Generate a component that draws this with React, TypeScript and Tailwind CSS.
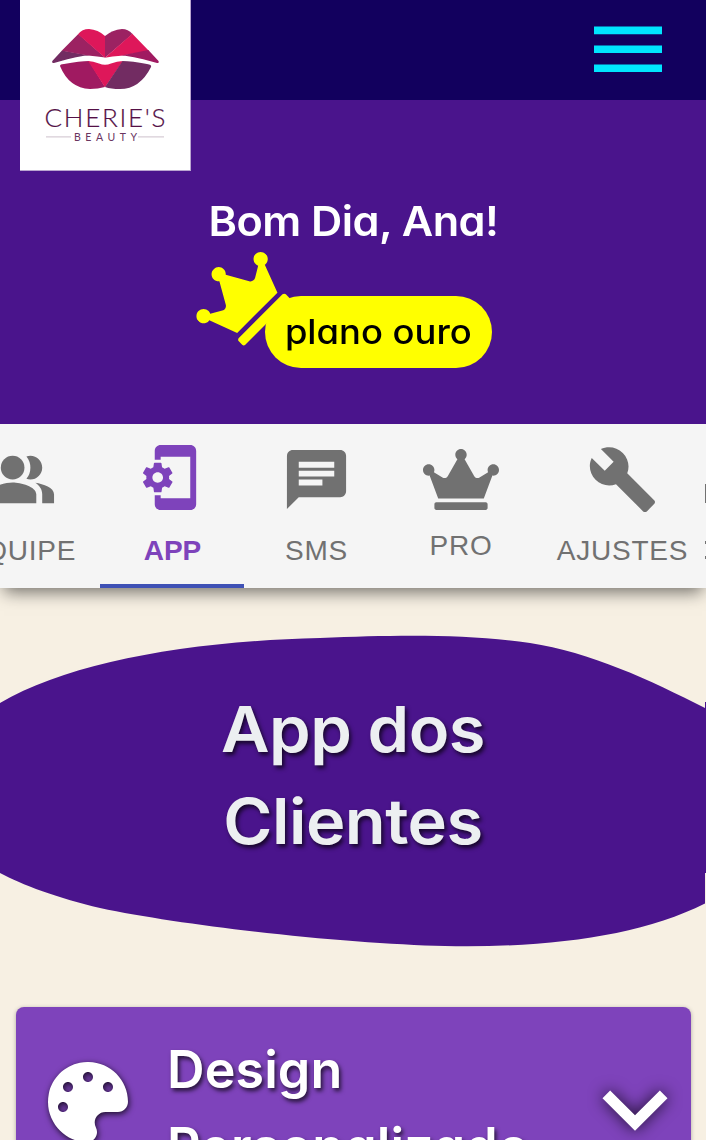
import type { ReactNode } from "react";
import { MdPeopleAlt, MdPhonelinkSetup, MdChat, MdBuild, MdExpandMore } from "react-icons/md";
import { FaCrown, FaPalette } from "react-icons/fa";

const geometric = "font-['Inter',sans-serif] [font-feature-settings:'cv11']";

function Logo() {
  return (
    <div className="absolute left-5 top-0 z-20 h-[171px] w-[171px] border-b border-r border-[#b9a5d0] bg-white">
      <svg viewBox="20 0 171 171" className="block h-[171px] w-[171px]">
        <g>
          <path d="M62 50.5L52.3 61Q51.5 63 54 63C66 60 78 56 88 55.6L90 55.6Z" fill="#722c62" />
          <path d="M61.7 50.8L78.3 34L105 57.5Q98 56.5 88 55.6Z" fill="#9c2262" />
          <path d="M78 34.2Q82 29 89 29Q98 29.5 105 36V57.8Z" fill="#de175a" />
          <path d="M105 36Q112 30 122 29Q128 29 132.5 34L105 57.8Z" fill="#9c2262" />
          <path d="M132.3 33.8L149 51L121 55.7Q112 56 105 57.8Z" fill="#de175a" />
          <path d="M148.3 50L158.5 61Q159.5 63 157 63C145 60 132 56 121 55.6Z" fill="#a01a61" />
          <path d="M60 66Q60 64 64 64Q80 61 89 61L105 87Q98 89 90 89Q69 88 60 66Z" fill="#a01a61" />
          <path d="M88 61Q93 61 99 63.5Q105 66 111 63.5Q117 61 123 61L105 87.2Z" fill="#de175a" />
          <path d="M122.5 61Q132 61 147 64Q152 64.5 151 67Q140 89 120 89Q111 89 105 87Z" fill="#722c62" />
        </g>
        <text x="44.5" y="127" textLength="121" fontFamily="Lato, sans-serif" fontSize="26" fontWeight="300" fill="#541046" stroke="#541046" strokeWidth="0.2">CHERIE'S</text>
        <text x="74" y="140.7" textLength="63" fontFamily="Lato, sans-serif" fontSize="10.5" fill="#6a3460">BEAUTY</text>
        <path d="M46 136.8H71M138 136.8H164" stroke="#d8cdd6" strokeWidth="1.3" />
      </svg>
    </div>
  );
}

function Tab({ icon, label, className, labelClass = "" }: { icon: ReactNode; label: string; className: string; labelClass?: string }) {
  return (
    <div className={`flex shrink-0 flex-col items-center ${className}`}>
      {icon}
      <span className={`whitespace-nowrap font-['Liberation_Sans',sans-serif] text-[28px] leading-[50px] ${labelClass}`}>{label}</span>
    </div>
  );
}

export default function App() {
  return (
    <div className="relative h-[1140px] w-[706px] overflow-hidden bg-[#f7f0e3]">
      <header className="flex h-[100px] justify-end bg-[#12005e] pr-11">
        <svg viewBox="0 0 68 46" className="mt-[26px] h-[46px] w-[68px]" fill="#00e5ff">
          <path d="M0 .6H68V8.3H0ZM0 19.5H68V27H0ZM0 38.4H68V46H0Z" />
        </svg>
      </header>
      <Logo />

      <section className="relative z-10 flex h-[324px] flex-col items-center bg-[#4a148c]">
        <h1 className={`mt-[91px] origin-center scale-x-[1.055] whitespace-nowrap text-[41px] font-semibold leading-[60px] tracking-[-0.5px] text-white ${geometric}`}>Bom Dia, Ana!</h1>
        <div className="relative ml-[51px] mt-[45px] flex h-[72px] w-[227px] items-center justify-center rounded-full bg-[#ffff00] pb-[2px]">
          <FaCrown className="absolute left-[-72px] top-[-38px] h-[76px] w-[95px] -rotate-45 text-[#ffff00]" />
          <span className={`relative scale-x-[1.07] whitespace-nowrap text-[34px] font-medium text-black ${geometric}`}>plano ouro</span>
        </div>
      </section>

      <nav className="relative flex h-[164px] bg-[#f5f5f5] text-[#717171] shadow-[0_8px_16px_-4px_rgba(0,0,0,0.55)]">
        <Tab className="-ml-[58px] w-[158px] pt-5" icon={<MdPeopleAlt className="h-[71px] w-[71px]" />} label="EQUIPE" labelClass="mt-[11px] tracking-[0.8px]" />
        <Tab className="w-[144px] border-b-4 border-[#3f51b5] pl-px pt-[18px] text-[#7e43bb]" icon={<MdPhonelinkSetup className="h-[71px] w-[71px]" />} label="APP" labelClass="mt-[13px] font-bold" />
        <Tab className="w-[145px] pt-5" icon={<MdChat className="h-[71px] w-[71px]" />} label="SMS" labelClass="mt-[11px] tracking-[0.8px]" />
        <Tab className="w-36 pt-[25px]" icon={<FaCrown className="h-[61px] w-[76px]" />} label="PRO" labelClass="mt-[11px] tracking-[0.8px]" />
        <Tab className="w-[179px] pt-5" icon={<MdBuild className="h-[71px] w-[71px]" />} label="AJUSTES" labelClass="mt-[11px] tracking-[0.8px]" />
        <svg viewBox="0 0 1 164" className="absolute right-0 top-0 h-[164px] w-px" fill="#717171">
          <path d="M0 60H1V79H0ZM0 117H1V120H0ZM0 132H1V135H0Z" />
        </svg>
      </nav>

      <section className="relative flex h-[419px] flex-col items-center">
        <svg viewBox="0 588 706 400" className="absolute left-0 top-0 h-[400px] w-[706px]">
          <path d="M0 703C70 662 190 641 320 638C400 635 465 634 530 643C590 652 650 680 705 708V903.5C640 936 550 948 445 946C350 944 190 927 100 908C60 899 20 884 0 873Z" fill="#4a148c" />
          <path d="M705 702H706V873H705Z" fill="#4a148c" />
        </svg>
        <h2 className={`relative mt-[95px] w-[300px] scale-x-[1.06] text-center text-[63px] font-semibold leading-[92px] tracking-[-0.5px] text-[#eceff1] [text-shadow:2px_3px_4px_rgba(0,0,0,0.7)] ${geometric}`}>App dos Clientes</h2>
      </section>

      <section className="relative mx-4 flex h-[190px] w-[675px] rounded-lg bg-[#7e43bb] shadow-[0_1px_4px_rgba(0,0,0,0.3)]">
        <FaPalette className="ml-8 mt-[55px] h-20 w-20 shrink-0 text-white drop-shadow-[1px_2px_3px_rgba(0,0,0,0.8)]" />
        <h3 className={`ml-[39px] mt-6 w-[403px] shrink-0 text-[52px] font-semibold leading-[77px] tracking-[0.1px] text-white [text-shadow:2px_3px_4px_rgba(0,0,0,0.7)] ${geometric}`}>Design Personalizado</h3>
        <MdExpandMore className="mt-[37px] h-[130px] w-[130px] shrink-0 text-white drop-shadow-[0_0_8px_rgba(0,0,0,0.8)]" />
      </section>
    </div>
  );
}
